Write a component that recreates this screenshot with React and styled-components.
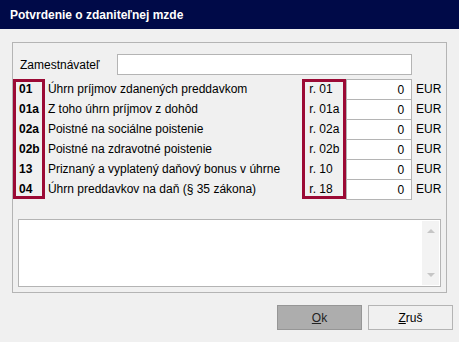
import React from "react";
import styled, { createGlobalStyle } from "styled-components";

const GlobalStyle = createGlobalStyle`
  html, body {
    margin: 0;
    padding: 0;
    background: #f0f0f0;
  }
  body {
    font-family: "Liberation Sans", Arial, sans-serif;
    font-size: 12px;
    color: #000;
  }
`;

// Window frame
const Window = styled.div`
  width: 459px;
  height: 342px;
  background: #f0f0f0;
  display: flex;
  flex-direction: column;
`;

const TitleBar = styled.div`
  height: 29px;
  background: #000a48;
  color: #fff;
  font-weight: bold;
  font-size: 12px;
  display: flex;
  align-items: center;
  padding-left: 10px;
`;

const Body = styled.div`
  flex: 1;
  display: flex;
  flex-direction: column;
  padding: 13px 6px 0 12px;
`;

const GroupBox = styled.div`
  width: 435px;
  height: 251px;
  box-sizing: border-box;
  border: 1px solid #b4b4b4;
  display: flex;
  flex-direction: column;
  padding: 11px 0 0 0;
`;

const EmployerRow = styled.div`
  display: flex;
  align-items: center;
  height: 21px;
`;

const EmployerLabel = styled.span`
  width: 104px;
  box-sizing: border-box;
  padding-left: 7px;
`;

const TextInput = styled.div`
  width: 295px;
  height: 21px;
  box-sizing: border-box;
  background: #fff;
  border: 1px solid #b4b4b4;
`;

// Rows of amounts
const Table = styled.div`
  display: flex;
  margin-top: 4px;
`;

const Column = styled.div`
  display: flex;
  flex-direction: column;
  width: ${(p) => p.$width}px;
  box-shadow: ${(p) => (p.$marked ? "inset 0 0 0 3px #9b0a35" : "none")};
  padding-left: ${(p) => p.$pad || 0}px;
  box-sizing: border-box;
`;

const Cell = styled.div`
  height: 20px;
  display: flex;
  align-items: center;
  font-weight: ${(p) => (p.$bold ? "bold" : "normal")};
  white-space: nowrap;
`;

const Amount = styled.div`
  height: 21px;
  margin-bottom: -1px;
  box-sizing: border-box;
  background: #fff;
  border: 1px solid #b4b4b4;
  display: flex;
  align-items: center;
  justify-content: flex-end;
  padding-right: 7px;
`;

const Memo = styled.div`
  margin: 20px 5px 0 5px;
  height: 68px;
  box-sizing: border-box;
  background: #fff;
  border: 1px solid #b4b4b4;
  display: flex;
  justify-content: flex-end;
  padding: 1px;
`;

const ScrollBar = styled.div`
  width: 17px;
  background: #f3f3f3;
  display: flex;
  flex-direction: column;
  justify-content: space-between;
  align-items: center;
  padding: 8px 0;
`;

const Arrow = styled.div`
  width: 0;
  height: 0;
  border-left: 4px solid transparent;
  border-right: 4px solid transparent;
  border-${(p) => (p.$down ? "top" : "bottom")}: 4px solid #c6c6c6;
`;

const Buttons = styled.div`
  display: flex;
  justify-content: flex-end;
  gap: 6px;
  margin-top: 12px;
`;

const Button = styled.div`
  width: 85px;
  height: 25px;
  box-sizing: border-box;
  display: flex;
  align-items: center;
  justify-content: center;
  border: 1px solid ${(p) => (p.$primary ? "#969696" : "#b4b4b4")};
  background: ${(p) => (p.$primary ? "#adadad" : "#f0f0f0")};
  color: ${(p) => (p.$primary ? "#222" : "#000")};
`;

const rows = [
  { code: "01", label: "Úhrn príjmov zdanených preddavkom", ref: "r. 01" },
  { code: "01a", label: "Z toho úhrn príjmov z dohôd", ref: "r. 01a" },
  { code: "02a", label: "Poistné na sociálne poistenie", ref: "r. 02a" },
  { code: "02b", label: "Poistné na zdravotné poistenie", ref: "r. 02b" },
  { code: "13", label: "Priznaný a vyplatený daňový bonus v úhrne", ref: "r. 10" },
  { code: "04", label: "Úhrn preddavkov na daň (§ 35 zákona)", ref: "r. 18" },
];

export default function App() {
  return (
    <Window>
      <GlobalStyle />
      <TitleBar>Potvrdenie o zdaniteľnej mzde</TitleBar>
      <Body>
        <GroupBox>
          <EmployerRow>
            <EmployerLabel>Zamestnávateľ</EmployerLabel>
            <TextInput />
          </EmployerRow>
          <Table>
            <Column $width={32} $marked $pad={6}>
              {rows.map((r) => (
                <Cell key={r.code} $bold>{r.code}</Cell>
              ))}
            </Column>
            <Column $width={258} $pad={3}>
              {rows.map((r) => (
                <Cell key={r.code}>{r.label}</Cell>
              ))}
            </Column>
            <Column $width={44} $marked $pad={7}>
              {rows.map((r) => (
                <Cell key={r.code}>{r.ref}</Cell>
              ))}
            </Column>
            <Column $width={66}>
              {rows.map((r) => (
                <Amount key={r.code}>0</Amount>
              ))}
            </Column>
            <Column $width={34} $pad={4}>
              {rows.map((r) => (
                <Cell key={r.code}>EUR</Cell>
              ))}
            </Column>
          </Table>
          <Memo>
            <ScrollBar>
              <Arrow />
              <Arrow $down />
            </ScrollBar>
          </Memo>
        </GroupBox>
        <Buttons>
          <Button $primary>
            <u>O</u>k
          </Button>
          <Button>
            <u>Z</u>ruš
          </Button>
        </Buttons>
      </Body>
    </Window>
  );
}
